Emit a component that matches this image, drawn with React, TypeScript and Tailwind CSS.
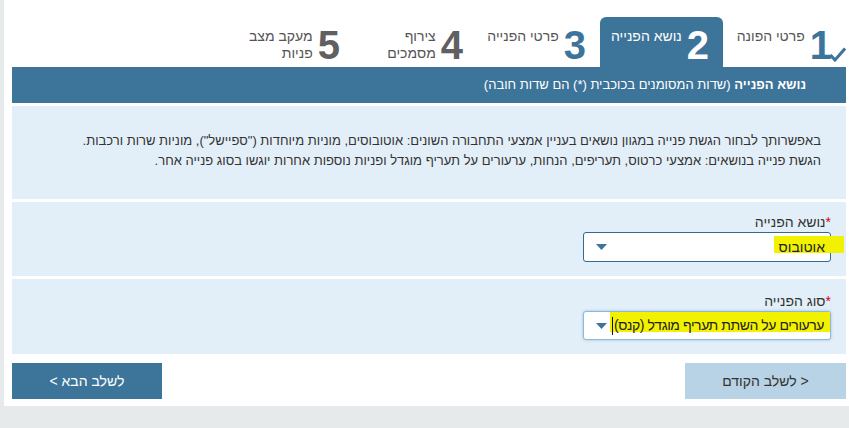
import { ReactNode } from 'react'

const BLUE = 'bg-[#3d7499]'

interface Step {
  num: string
  lines: string[]
  state: 'done' | 'active' | 'next' | 'todo'
}

const steps: Step[] = [
  { num: '1', lines: ['פרטי הפונה'], state: 'done' },
  { num: '2', lines: ['נושא הפנייה'], state: 'active' },
  { num: '3', lines: ['פרטי הפנייה'], state: 'next' },
  { num: '4', lines: ['צירוף', 'מסמכים'], state: 'todo' },
  { num: '5', lines: ['מעקב מצב', 'פניות'], state: 'todo' },
]

function StepTab({ step }: { step: Step }) {
  const active = step.state === 'active'
  const numColor =
    step.state === 'active' ? 'text-white' : step.state === 'todo' ? 'text-[#606060]' : 'text-[#3d7499]'
  return (
    <div
      className={`relative flex h-[50px] w-[123px] items-start gap-[5px] pr-[14px] pt-[8px] ${
        active ? `${BLUE} rounded-t-[6px]` : ''
      }`}
    >
      <span className={`text-[40px] font-bold leading-[40px] ${numColor}`}>{step.num}</span>
      <div className={`mt-[3px] text-[14px] leading-[17px] ${active ? 'text-white' : 'text-[#555]'}`}>
        {step.lines.map((l) => (
          <div key={l}>{l}</div>
        ))}
      </div>
      {step.state === 'done' && (
        <svg className="absolute right-0 top-[30px] z-10" width="17" height="15" viewBox="0 0 17 15">
          <path d="M1.5 8 L6 13 L16 1.5" fill="none" stroke="#3d7499" strokeWidth="3" />
        </svg>
      )}
    </div>
  )
}

function Section({ children, className }: { children: ReactNode; className: string }) {
  return <div className={`bg-[#e3eff8] ${className}`}>{children}</div>
}

function Arrow() {
  return (
    <svg width="11" height="6" viewBox="0 0 11 6" className="shrink-0">
      <path d="M0 0 H11 L5.5 6 Z" fill="#3d7499" />
    </svg>
  )
}

export default function App() {
  return (
    <div className="h-[428px] w-[849px] overflow-hidden bg-[#e6eaeb] font-['Liberation_Sans',Arial,sans-serif]">
      <div dir="rtl" className="ml-[4px] h-[406px] bg-white pl-[8px] pr-[3px]">
        {/* Wizard steps */}
        <div className="flex h-[67px] items-end">
          {steps.map((s) => (
            <StepTab key={s.num} step={s} />
          ))}
        </div>

        {/* Header bar */}
        <div className={`${BLUE} flex h-[36px] items-center pr-[40px] text-[13px] text-white`}>
          <span className="font-bold">נושא הפנייה</span>
          <span>&nbsp;(שדות המסומנים בכוכבית (*) הם שדות חובה)</span>
        </div>

        {/* Intro */}
        <Section className="mt-[3px] h-[93px] pr-[25px] pt-[25px] text-[13px] leading-[20px] text-[#333]">
          <p>
            באפשרותך לבחור הגשת פנייה במגוון נושאים בעניין אמצעי התחבורה השונים: אוטובוסים, מוניות מיוחדות
            ("ספיישל"), מוניות שרות ורכבות.
          </p>
          <p>
            הגשת פנייה בנושאים: אמצעי כרטוס, תעריפים, הנחות, ערעורים על תעריף מוגדל ופניות נוספות אחרות יוגשו
            בסוג פנייה אחר.
          </p>
        </Section>

        {/* Subject */}
        <Section className="mt-[3px] h-[74px] pr-[15px] pt-[10px]">
          <label className="block text-[14px] leading-[20px] text-[#333]">
            <span className="text-[#d0021b]">*</span>נושא הפנייה
          </label>
          <div className="relative flex h-[30px] w-[248px] items-center justify-between rounded-[3px] border border-[#35698e] bg-white pl-[12px] pr-[5px]">
            <span className="relative z-10 text-[14px] text-[#222]">אוטובוס</span>
            <Arrow />
            <span className="absolute right-[-14px] top-[3px] h-[17px] w-[70px] bg-[#f2f200]" />
          </div>
        </Section>

        {/* Type */}
        <Section className="mt-[3px] h-[75px] pr-[15px] pt-[12px]">
          <label className="block text-[14px] leading-[20px] text-[#333]">
            <span className="text-[#d0021b]">*</span>סוג הפנייה
          </label>
          <div className="relative flex h-[29px] w-[248px] items-center justify-between rounded-[3px] border border-[#8db7db] bg-white pl-[12px] pr-[6px] shadow-[0_0_3px_rgba(102,160,210,0.6)]">
            <span className="relative z-10 flex items-center whitespace-nowrap text-[14px] tracking-[-0.45px] text-[#222]">
              ערעורים על השתת תעריף מוגדל (קנס)
              <span className="mr-[1px] inline-block h-[18px] w-px bg-[#111]" />
            </span>
            <Arrow />
            <span className="absolute right-0 top-0 h-[20px] w-[220px] bg-[#f2f200]" />
          </div>
        </Section>

        {/* Buttons */}
        <div className="mt-[9px] flex items-start justify-between">
          <button className="h-[36px] w-[161px] bg-[#b8d3e5] text-[14px] text-[#333]">&lt; לשלב הקודם</button>
          <button className={`${BLUE} h-[36px] w-[150px] text-[14px] text-white`}>לשלב הבא &gt;</button>
        </div>
      </div>
    </div>
  )
}
